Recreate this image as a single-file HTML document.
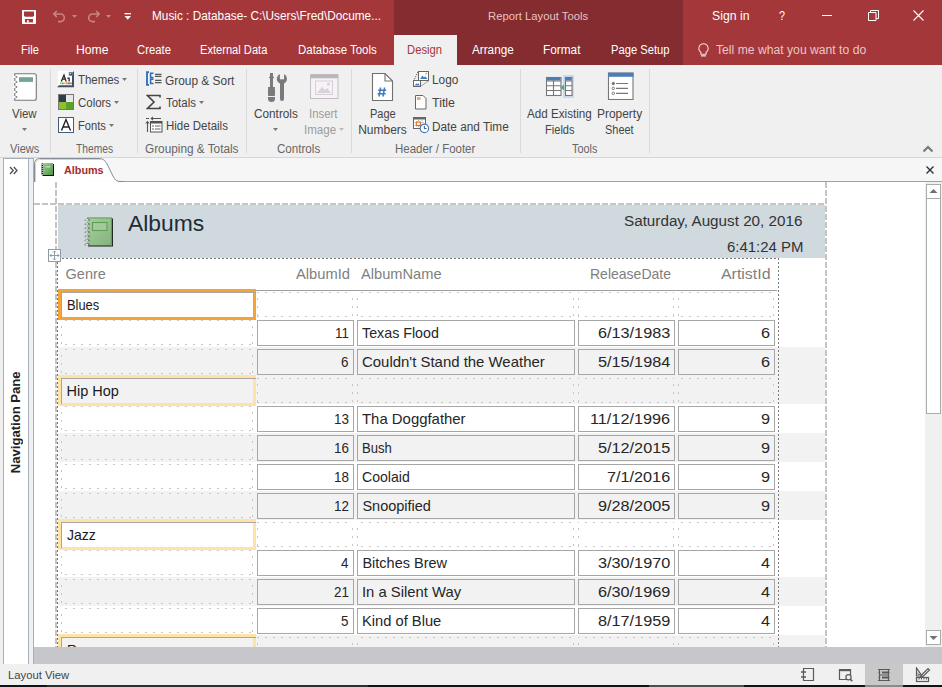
<!DOCTYPE html>
<html><head><meta charset="utf-8"><style>
html,body{margin:0;padding:0;}
body{width:942px;height:687px;position:relative;overflow:hidden;font-family:"Liberation Sans", sans-serif;background:#fff}
body div, body svg{position:absolute;}
</style></head><body>
<div style="left:0px;top:0px;width:942px;height:65px;background:#A4373A"></div>
<div style="left:394px;top:0px;width:289px;height:65px;background:#842C2F"></div>
<div style="left:394px;top:35px;width:63px;height:30px;background:#F0F0F0"></div>
<div style="left:152.40px;top:9.00px;font-size:13px;line-height:13px;color:#FFFFFF;white-space:pre;transform:scaleX(0.9082);transform-origin:left top;">Music : Database- C:\Users\Fred\Docume...</div>
<div style="left:488.40px;top:10.77px;font-size:11.5px;line-height:11.5px;color:#E6C3C4;white-space:pre;transform:scaleX(0.9818);transform-origin:left top;">Report Layout Tools</div>
<div style="left:712.00px;top:8.50px;font-size:13px;line-height:13px;color:#FFFFFF;white-space:pre;transform:scaleX(0.9427);transform-origin:left top;">Sign in</div>
<div style="left:778.50px;top:8.50px;font-size:13px;line-height:13px;color:#FFFFFF;white-space:pre;transform:scaleX(0.8316);transform-origin:left top;">?</div>
<div style="left:822px;top:15px;width:10px;height:1px;background:#fff"></div>
<svg style="left:868px;top:10px" width="11" height="11"><path d="M0.5 2.5h7.5v8h-7.5z M2.5 2.5v-2h8v8h-2.5" fill="none" stroke="#fff" stroke-width="1"/></svg>
<svg style="left:913px;top:10px" width="12" height="11"><path d="M0.5 0.5L10.5 10.5M10.5 0.5L0.5 10.5" stroke="#fff" stroke-width="1.1"/></svg>
<svg style="left:22px;top:10px" width="14" height="14"><rect x="0" y="0" width="14" height="14" rx="0.8" fill="#fff"/><path d="M2 1.6h10v4.2l-1 1H3l-1-1z" fill="#A4373A"/><rect x="3" y="9" width="8" height="3.4" fill="#A4373A"/><rect x="5" y="10.2" width="1.8" height="2.2" fill="#fff"/></svg>
<svg style="left:51px;top:9px" width="16" height="15"><path d="M3 5h6.5a3.8 3.8 0 0 1 0 7.6H7M5.8 2L2.8 5l3 3" fill="none" stroke="#C98487" stroke-width="1.6"/></svg>
<svg style="left:72px;top:15px" width="6" height="4"><path d="M0 0h5l-2.5 3z" fill="#C98487"/></svg>
<svg style="left:86px;top:9px" width="16" height="15"><path d="M13 5H6.5a3.8 3.8 0 0 0 0 7.6H9M10.2 2l3 3-3 3" fill="none" stroke="#C98487" stroke-width="1.6"/></svg>
<svg style="left:106px;top:15px" width="6" height="4"><path d="M0 0h5l-2.5 3z" fill="#C98487"/></svg>
<svg style="left:124px;top:13px" width="8" height="8"><rect x="0.5" y="0" width="6.5" height="1.3" fill="#fff"/><path d="M0.5 3h6.5l-3.25 3.8z" fill="#fff"/></svg>
<div style="left:21.30px;top:44.42px;font-size:12.5px;line-height:12.5px;color:#FFFFFF;white-space:pre;transform:scaleX(0.8894);transform-origin:left top;">File</div>
<div style="left:75.50px;top:44.42px;font-size:12.5px;line-height:12.5px;color:#FFFFFF;white-space:pre;transform:scaleX(0.9738);transform-origin:left top;">Home</div>
<div style="left:137.20px;top:44.42px;font-size:12.5px;line-height:12.5px;color:#FFFFFF;white-space:pre;transform:scaleX(0.9040);transform-origin:left top;">Create</div>
<div style="left:200.30px;top:44.42px;font-size:12.5px;line-height:12.5px;color:#FFFFFF;white-space:pre;transform:scaleX(0.8890);transform-origin:left top;">External Data</div>
<div style="left:297.50px;top:44.42px;font-size:12.5px;line-height:12.5px;color:#FFFFFF;white-space:pre;transform:scaleX(0.9158);transform-origin:left top;">Database Tools</div>
<div style="left:472.20px;top:44.42px;font-size:12.5px;line-height:12.5px;color:#FFFFFF;white-space:pre;transform:scaleX(0.9371);transform-origin:left top;">Arrange</div>
<div style="left:543.30px;top:44.42px;font-size:12.5px;line-height:12.5px;color:#FFFFFF;white-space:pre;transform:scaleX(0.9453);transform-origin:left top;">Format</div>
<div style="left:610.50px;top:44.42px;font-size:12.5px;line-height:12.5px;color:#FFFFFF;white-space:pre;transform:scaleX(0.8957);transform-origin:left top;">Page Setup</div>
<div style="left:407.40px;top:44.42px;font-size:12.5px;line-height:12.5px;color:#A4373A;white-space:pre;transform:scaleX(0.9014);transform-origin:left top;">Design</div>
<svg style="left:698px;top:43px" width="12" height="14"><path d="M5.5 0.8a4.6 4.6 0 0 0-2.6 8.4v2h5.2v-2A4.6 4.6 0 0 0 5.5 0.8z" fill="none" stroke="#F3DADB" stroke-width="1.1"/><rect x="3" y="12.2" width="5" height="1.3" fill="#F3DADB"/></svg>
<div style="left:715.60px;top:44.42px;font-size:12.5px;line-height:12.5px;color:#E9C6C7;white-space:pre;transform:scaleX(0.9737);transform-origin:left top;">Tell me what you want to do</div>
<div style="left:0px;top:65px;width:942px;height:92px;background:#F0F0F0"></div>
<div style="left:0px;top:157px;width:942px;height:1px;background:#D6D6D6"></div>
<div style="left:50px;top:69px;width:1px;height:84px;background:#DADADA"></div>
<div style="left:137px;top:69px;width:1px;height:84px;background:#DADADA"></div>
<div style="left:246px;top:69px;width:1px;height:84px;background:#DADADA"></div>
<div style="left:351px;top:69px;width:1px;height:84px;background:#DADADA"></div>
<div style="left:520px;top:69px;width:1px;height:84px;background:#DADADA"></div>
<div style="left:649px;top:69px;width:1px;height:84px;background:#DADADA"></div>
<div style="left:10.10px;top:142.74px;font-size:12px;line-height:12px;color:#666666;white-space:pre;transform:scaleX(0.9214);transform-origin:left top;">Views</div>
<div style="left:75.50px;top:142.74px;font-size:12px;line-height:12px;color:#666666;white-space:pre;transform:scaleX(0.8541);transform-origin:left top;">Themes</div>
<div style="left:145.10px;top:142.74px;font-size:12px;line-height:12px;color:#666666;white-space:pre;transform:scaleX(0.9826);transform-origin:left top;">Grouping &amp; Totals</div>
<div style="left:277.30px;top:142.74px;font-size:12px;line-height:12px;color:#666666;white-space:pre;transform:scaleX(0.9664);transform-origin:left top;">Controls</div>
<div style="left:395.40px;top:142.74px;font-size:12px;line-height:12px;color:#666666;white-space:pre;transform:scaleX(0.9553);transform-origin:left top;">Header / Footer</div>
<div style="left:572.10px;top:142.74px;font-size:12px;line-height:12px;color:#666666;white-space:pre;transform:scaleX(0.9029);transform-origin:left top;">Tools</div>
<svg style="left:13px;top:73px" width="25" height="29"><path d="M1.8 0.7H21.3a2 2 0 0 1 2 2V25.3a2 2 0 0 1-2 2H1.8z" fill="#fff" stroke="#777" stroke-width="1.1"/><rect x="6" y="4.2" width="14" height="4.7" fill="#74A592"/><rect x="0.3" y="3" width="2.4" height="2" fill="#FFFFFF"/><rect x="2.6" y="3" width="1.6" height="2" fill="#8A8A8A"/><rect x="0.3" y="8" width="2.4" height="2" fill="#FFFFFF"/><rect x="2.6" y="8" width="1.6" height="2" fill="#8A8A8A"/><rect x="0.3" y="13" width="2.4" height="2" fill="#FFFFFF"/><rect x="2.6" y="13" width="1.6" height="2" fill="#8A8A8A"/><rect x="0.3" y="18" width="2.4" height="2" fill="#FFFFFF"/><rect x="2.6" y="18" width="1.6" height="2" fill="#8A8A8A"/><rect x="0.3" y="23" width="2.4" height="2" fill="#FFFFFF"/><rect x="2.6" y="23" width="1.6" height="2" fill="#8A8A8A"/></svg>
<div style="left:12.20px;top:107.84px;font-size:12px;line-height:12px;color:#444444;white-space:pre;transform:scaleX(0.9535);transform-origin:left top;">View</div>
<svg style="left:22px;top:128px" width="6" height="4"><path d="M0 0h5l-2.5 3z" fill="#777"/></svg>
<svg style="left:57px;top:70px" width="18" height="18"><rect x="0.8" y="1" width="15" height="15.5" fill="#fff"/><path d="M0 17.2L2 15.2H15V3L17 1V17.2z" fill="#3D5068"/><rect x="12" y="2.2" width="3.4" height="3.4" fill="#3D5068" stroke="#7A90B0" stroke-width="0.6"/><path d="M12.8 3h1.6l-1.6 1.6z" fill="#fff"/><path d="M4.3 11.6L7 5l2.2 6.6M5.3 9.2h3.2M10.3 8.2h1.8v3.4" fill="none" stroke="#1E2830" stroke-width="1.3"/><ellipse cx="3.9" cy="13.3" rx="0.85" ry="1.1" fill="#8CC63F"/><ellipse cx="5.9" cy="13.3" rx="0.85" ry="1.1" fill="#3FA535"/><ellipse cx="8" cy="13.3" rx="0.85" ry="1.1" fill="#F2B01E"/><ellipse cx="10" cy="13.3" rx="0.85" ry="1.1" fill="#F26522"/><ellipse cx="12" cy="13.3" rx="0.85" ry="1.1" fill="#D7261E"/><ellipse cx="14" cy="13.3" rx="0.85" ry="1.1" fill="#8C7D3C"/></svg>
<svg style="left:58px;top:94px" width="16" height="16"><rect x="0.5" y="0.5" width="15" height="15" fill="#fff" stroke="#777"/><rect x="1" y="1" width="7" height="7" fill="#2C3E4A"/><rect x="8" y="1" width="7" height="7" fill="#E8E8E8"/><rect x="1" y="8" width="7" height="7" fill="#8DC02A"/><rect x="8" y="8" width="7" height="7" fill="#5BA22C"/></svg>
<svg style="left:58px;top:117px" width="16" height="16"><rect x="0.5" y="0.5" width="15" height="15" fill="#fff" stroke="#4A5A7A"/><path d="M3.5 13.5L8 2.5l4.5 11M5 10h6" fill="none" stroke="#222" stroke-width="1.4"/></svg>
<div style="left:77.60px;top:73.94px;font-size:12px;line-height:12px;color:#444444;white-space:pre;transform:scaleX(0.9534);transform-origin:left top;">Themes</div>
<div style="left:77.60px;top:97.14px;font-size:12px;line-height:12px;color:#444444;white-space:pre;transform:scaleX(0.9544);transform-origin:left top;">Colors</div>
<div style="left:77.60px;top:119.74px;font-size:12px;line-height:12px;color:#444444;white-space:pre;transform:scaleX(0.9300);transform-origin:left top;">Fonts</div>
<svg style="left:122px;top:78px" width="6" height="4"><path d="M0 0h5l-2.5 3z" fill="#777"/></svg>
<svg style="left:114px;top:101px" width="6" height="4"><path d="M0 0h5l-2.5 3z" fill="#777"/></svg>
<svg style="left:109px;top:124px" width="6" height="4"><path d="M0 0h5l-2.5 3z" fill="#777"/></svg>
<svg style="left:146px;top:71px" width="17" height="16"><path d="M3 1.2H1v12.6h2" fill="none" stroke="#2E6DB4" stroke-width="1.8"/><path d="M7.5 2.2H4.6v4.2h2.9M7.5 8.2H4.6v4.2h2.9" fill="none" stroke="#2E6DB4" stroke-width="1.5"/><path d="M9 3.4h6.5M9 5.4h6.5M9 9.4h6.5M9 11.6h6.5" stroke="#555" stroke-width="1.1"/></svg>
<svg style="left:146px;top:94px" width="16" height="16"><path d="M14 3.5V1.5H1.5L8 8l-6.5 6.5H14v-2" fill="none" stroke="#444" stroke-width="1.6"/></svg>
<svg style="left:145px;top:116px" width="18" height="17"><path d="M1 2.5h3M6 2.5h10M8 0.8L6.2 2.5 8 4.2" fill="none" stroke="#555" stroke-width="1.1"/><path d="M2.5 16V6M0.8 7.5L2.5 5.5l1.7 2" fill="none" stroke="#555" stroke-width="1.1"/><rect x="5.5" y="5.5" width="11.5" height="10.5" fill="#fff" stroke="#555"/><rect x="5.5" y="5.5" width="11.5" height="2" fill="#555"/><path d="M7 10h2M10 10h5.5M7 13h2M10 13h5.5" stroke="#666"/></svg>
<div style="left:165.20px;top:74.54px;font-size:12px;line-height:12px;color:#444444;white-space:pre;transform:scaleX(0.9911);transform-origin:left top;">Group &amp; Sort</div>
<div style="left:165.70px;top:97.24px;font-size:12px;line-height:12px;color:#444444;white-space:pre;transform:scaleX(0.9547);transform-origin:left top;">Totals</div>
<div style="left:165.70px;top:120.14px;font-size:12px;line-height:12px;color:#444444;white-space:pre;transform:scaleX(0.9570);transform-origin:left top;">Hide Details</div>
<svg style="left:199px;top:101px" width="6" height="4"><path d="M0 0h5l-2.5 3z" fill="#777"/></svg>
<svg style="left:262px;top:72px" width="30" height="30"><g fill="#7A7A7A"><rect x="8" y="1" width="3" height="15"/><rect x="7" y="4.8" width="5" height="1.3"/><rect x="6" y="15" width="7" height="1.4"/><rect x="6" y="16" width="7" height="8" rx="0.8"/><path d="M6 25h7v1.5a3.5 3.5 0 0 1-7 0z"/><circle cx="19.9" cy="6.8" r="5.1"/><rect x="18" y="9" width="4" height="20" rx="2"/></g><path d="M17.9 0.5h4.1v6.8h-4.1z" fill="#F0F0F0"/></svg>
<div style="left:253.70px;top:107.74px;font-size:12px;line-height:12px;color:#444444;white-space:pre;transform:scaleX(0.9821);transform-origin:left top;">Controls</div>
<svg style="left:273px;top:128px" width="6" height="4"><path d="M0 0h5l-2.5 3z" fill="#777"/></svg>
<svg style="left:310px;top:74px" width="29" height="25"><rect x="0.5" y="0.5" width="27.5" height="24" fill="#F6F2F6" stroke="#C4BEC4"/><rect x="0.5" y="0.5" width="27.5" height="3.8" fill="#B9B5B9"/><rect x="5.5" y="7" width="17" height="13.5" fill="none" stroke="#D6D0D6" stroke-width="1"/><path d="M7 19l5-6 3 3 2-2 4 5z" fill="#DAD2DA"/><circle cx="18.5" cy="10" r="1.6" fill="#DAD2DA"/></svg>
<div style="left:309.30px;top:107.74px;font-size:12px;line-height:12px;color:#9C9C9C;white-space:pre;transform:scaleX(0.9500);transform-origin:left top;">Insert</div>
<div style="left:303.50px;top:124.04px;font-size:12px;line-height:12px;color:#9C9C9C;white-space:pre;transform:scaleX(0.9652);transform-origin:left top;">Image</div>
<svg style="left:339px;top:128px" width="6" height="4"><path d="M0 0h5l-2.5 3z" fill="#BBBBBB"/></svg>
<svg style="left:371px;top:73px" width="23" height="28"><path d="M1.5 0.5h12.5l7.5 7.5v19.5h-20z" fill="#fff" stroke="#707070" stroke-width="1.1"/><path d="M14 0.5v7.5h7.5" fill="none" stroke="#707070" stroke-width="1.1"/><path d="M9.6 14.5l-1.6 9M13.6 14.5l-1.6 9M7.2 17.3h8M6.6 20.8h8" fill="none" stroke="#3F7CC0" stroke-width="1.5"/></svg>
<div style="left:370.40px;top:108.04px;font-size:12px;line-height:12px;color:#444444;white-space:pre;transform:scaleX(0.9172);transform-origin:left top;">Page</div>
<div style="left:358.20px;top:123.84px;font-size:12px;line-height:12px;color:#444444;white-space:pre;">Numbers</div>
<svg style="left:412px;top:70px" width="18" height="18"><rect x="6.5" y="1.5" width="10" height="9" fill="#fff" stroke="#666"/><path d="M8 9l2.5-3.5 1.5 2 1.2-1.3L15.5 9z" fill="#3F7CC0"/><rect x="13.5" y="2.8" width="1.6" height="1.6" fill="#F0A030"/><rect x="1.5" y="10.5" width="7" height="6" fill="#fff" stroke="#666"/><path d="M2.5 15.5l2-2.2 1 1 1-1 1.3 2.2z" fill="#3F7CC0"/><path d="M6 1.8L2 10M16.5 11L9 16" fill="none" stroke="#555" stroke-dasharray="1.2 1.2"/></svg>
<svg style="left:414px;top:95px" width="13" height="15"><path d="M1.5 0.5h7.5l3 3v10.5h-10.5z" fill="#fff" stroke="#666"/><rect x="3" y="2" width="3.6" height="3" fill="#E6B25E"/></svg>
<svg style="left:412px;top:116px" width="18" height="18"><rect x="1.5" y="1.5" width="12" height="11" fill="#fff" stroke="#666"/><rect x="1" y="1" width="13" height="2.5" fill="#666"/><path d="M2.5 6.5h10M2.5 9.5h10M6.5 4v8M10 4v8" stroke="#999" stroke-dasharray="1 1" stroke-width="0.8"/><rect x="4.3" y="6" width="4" height="3.6" fill="#fff" stroke="#E07020" stroke-width="1.2"/><circle cx="12.4" cy="12.4" r="4.2" fill="#fff" stroke="#3F7CC0" stroke-width="1.2"/><path d="M12.3 9.8v2.8h2.2" fill="none" stroke="#3F4850" stroke-width="1"/></svg>
<div style="left:432.30px;top:74.44px;font-size:12px;line-height:12px;color:#444444;white-space:pre;transform:scaleX(0.9850);transform-origin:left top;">Logo</div>
<div style="left:432.30px;top:97.44px;font-size:12px;line-height:12px;color:#444444;white-space:pre;transform:scaleX(1.0360);transform-origin:left top;">Title</div>
<div style="left:432.30px;top:120.54px;font-size:12px;line-height:12px;color:#444444;white-space:pre;transform:scaleX(0.9826);transform-origin:left top;">Date and Time</div>
<svg style="left:545px;top:74px" width="30" height="25"><rect x="18" y="1" width="11" height="23" fill="#C8DCEE"/><rect x="1.5" y="3.5" width="14.5" height="18" fill="#fff" stroke="#777" stroke-width="1.1"/><rect x="2" y="3.5" width="13.5" height="3" fill="#4A7EBB"/><path d="M8.5 3.5v18M2 7h14M2 11.8h14M2 16.5h14" stroke="#777" stroke-width="1.1"/><rect x="20.5" y="3.5" width="6.5" height="18" fill="#fff" stroke="#777" stroke-width="1.1"/><rect x="21" y="3.5" width="5.5" height="3" fill="#4A7EBB"/><path d="M21 7h6M21 11.8h6M21 16.5h6" stroke="#777" stroke-width="1.1"/><path d="M15.2 13.5l4-3v6z" fill="#5BA08A"/></svg>
<div style="left:527.00px;top:108.04px;font-size:12px;line-height:12px;color:#444444;white-space:pre;transform:scaleX(0.9712);transform-origin:left top;">Add Existing</div>
<div style="left:545.10px;top:123.84px;font-size:12px;line-height:12px;color:#444444;white-space:pre;transform:scaleX(0.9238);transform-origin:left top;">Fields</div>
<svg style="left:607px;top:72px" width="27" height="28"><rect x="1.5" y="1" width="24.5" height="26.5" fill="#fff" stroke="#777" stroke-width="1.1"/><rect x="1" y="0.8" width="25.5" height="4" fill="#4A7EBB"/><circle cx="6.3" cy="11.5" r="1.2" fill="#777" stroke="#777"/><circle cx="6.3" cy="16.4" r="1.2" fill="#fff" stroke="#777"/><circle cx="6.3" cy="21.4" r="1.2" fill="#fff" stroke="#777"/><path d="M9 11.5h12M9 16.4h12M9 21.4h12" stroke="#777" stroke-width="1.1"/></svg>
<div style="left:596.80px;top:108.04px;font-size:12px;line-height:12px;color:#444444;white-space:pre;transform:scaleX(0.9943);transform-origin:left top;">Property</div>
<div style="left:605.00px;top:123.84px;font-size:12px;line-height:12px;color:#444444;white-space:pre;transform:scaleX(0.9114);transform-origin:left top;">Sheet</div>
<svg style="left:922px;top:145px" width="12" height="8"><path d="M1.5 6.5l4.5-4.5 4.5 4.5" fill="none" stroke="#777" stroke-width="2"/></svg>
<div style="left:0px;top:158px;width:942px;height:506px;background:#F0F0F0"></div>
<div style="left:3px;top:158px;width:26px;height:506px;background:#FFFFFF;border-left:1px solid #A9AFB8;border-right:1px solid #A9AFB8;border-top:1px solid #A9AFB8;box-sizing:border-box"></div>
<div style="left:29px;top:158px;width:5px;height:506px;background:#EEF0F3;border-right:1px solid #A9AFB8;border-top:1px solid #A9AFB8;box-sizing:border-box"></div>
<svg style="left:9px;top:166px" width="10" height="9"><path d="M1 1l3.2 3.5L1 8M4.8 1l3.2 3.5L4.8 8" fill="none" stroke="#4A5058" stroke-width="1.3"/></svg>
<div style="left:-34px;top:415px;width:100px;height:14px;transform:rotate(-90deg);font-size:12px;font-weight:bold;color:#222;text-align:center;line-height:14px;white-space:nowrap"><span style="display:inline-block;transform:scaleX(1.09)">Navigation Pane</span></div>
<div style="left:34px;top:158px;width:908px;height:24px;background:#F6F6F6"></div>
<div style="left:118px;top:181px;width:824px;height:1px;background:#9AA1A9"></div>
<svg style="left:34px;top:158px" width="90" height="24"><path d="M0.5 24V5.5a5 5 0 0 1 5-5H65C69.5 0.5 71.5 3 73.5 7L79.5 19C81.5 22.5 83 23.5 87 23.5H90" fill="#FFFFFF" stroke="#858C95"/><path d="M1.5 24V5.5a4 4 0 0 1 4-4H67" fill="none" stroke="#E8CFA8"/></svg>
<svg style="left:41px;top:163px" width="13" height="13"><defs><linearGradient id="g0" x1="0" y1="0" x2="1" y2="1"><stop offset="0" stop-color="#A6D49C"/><stop offset="1" stop-color="#4C9246"/></linearGradient></defs><rect x="1.5" y="1" width="11.5" height="12" fill="#111"/><rect x="1" y="0" width="11" height="12" fill="url(#g0)"/><rect x="4" y="2.5" width="5.5" height="2.5" fill="#B7DDAE" stroke="#6FAE66" stroke-width="0.7"/><path d="M1.2 0.5v11.5" stroke="#111" stroke-width="1.4"/><path d="M1.2 1v11" stroke="#fff" stroke-width="1" stroke-dasharray="1 1"/></svg>
<div style="left:64.20px;top:164.79px;font-size:11px;line-height:11px;color:#A52B2F;font-weight:bold;white-space:pre;transform:scaleX(0.9823);transform-origin:left top;">Albums</div>
<svg style="left:925px;top:165px" width="10" height="10"><path d="M1.5 1.5l7 7M8.5 1.5l-7 7" stroke="#2E3238" stroke-width="1.4"/></svg>
<div style="left:34px;top:182px;width:891px;height:465px;background:#FFFFFF"></div>
<div style="left:926px;top:184px;width:15px;height:461px;background:#F0F0F0"></div>
<div style="left:926px;top:184px;width:15px;height:15px;border:1px solid #ABABAB;box-sizing:border-box;background:#fff"></div>
<div style="left:926px;top:198px;width:15px;height:216px;border:1px solid #ABABAB;box-sizing:border-box;background:#fff"></div>
<div style="left:926px;top:630px;width:15px;height:15px;border:1px solid #ABABAB;box-sizing:border-box;background:#fff"></div>
<svg style="left:929px;top:188px" width="9" height="6"><path d="M0.5 5l4-4 4 4z" fill="#707070"/></svg>
<svg style="left:929px;top:635px" width="9" height="6"><path d="M0.5 1l4 4 4-4z" fill="#707070"/></svg>
<div style="left:34px;top:647px;width:908px;height:17px;background:#C6C7CA"></div>
<div style="left:58px;top:205px;width:767px;height:53px;background:#CFD9DE"></div>
<svg style="left:34px;top:182px" width="794" height="465"><path d="M0 22h792" stroke="#C4C4C4" stroke-width="2" stroke-dasharray="6 2"/><path d="M22 0v465M792 0v465" stroke="#C4C4C4" stroke-width="2" stroke-dasharray="6 2"/></svg>
<svg style="left:84px;top:216px" width="32" height="32"><defs><linearGradient id="g1" x1="0" y1="0" x2="1" y2="1"><stop offset="0" stop-color="#A9CFA0"/><stop offset="1" stop-color="#84B27B"/></linearGradient></defs><rect x="4" y="2.5" width="25" height="28" fill="#1A1D1A"/><rect x="3" y="1.5" width="25" height="28" fill="url(#g1)"/><path d="M3 2h24.5v27.5" fill="none" stroke="#5FA056" stroke-width="1.2"/><rect x="8.5" y="6.5" width="14.5" height="8" fill="#A2CB99" stroke="#5E9E55" stroke-width="1.1"/><path d="M0.8 4.5q2.5-2.5 5 0" fill="none" stroke="#777B82" stroke-width="1.5"/><path d="M1.5 3.7h2.5" stroke="#FFFFFF" stroke-width="0.9"/><path d="M0.8 8.6q2.5-2.5 5 0" fill="none" stroke="#777B82" stroke-width="1.5"/><path d="M1.5 7.8h2.5" stroke="#FFFFFF" stroke-width="0.9"/><path d="M0.8 12.7q2.5-2.5 5 0" fill="none" stroke="#777B82" stroke-width="1.5"/><path d="M1.5 11.9h2.5" stroke="#FFFFFF" stroke-width="0.9"/><path d="M0.8 16.8q2.5-2.5 5 0" fill="none" stroke="#777B82" stroke-width="1.5"/><path d="M1.5 16.0h2.5" stroke="#FFFFFF" stroke-width="0.9"/><path d="M0.8 20.9q2.5-2.5 5 0" fill="none" stroke="#777B82" stroke-width="1.5"/><path d="M1.5 20.1h2.5" stroke="#FFFFFF" stroke-width="0.9"/><path d="M0.8 25.0q2.5-2.5 5 0" fill="none" stroke="#777B82" stroke-width="1.5"/><path d="M1.5 24.2h2.5" stroke="#FFFFFF" stroke-width="0.9"/><path d="M0.8 29.1q2.5-2.5 5 0" fill="none" stroke="#777B82" stroke-width="1.5"/><path d="M1.5 28.3h2.5" stroke="#FFFFFF" stroke-width="0.9"/></svg>
<div style="left:128.30px;top:213.05px;font-size:22.5px;line-height:22.5px;color:#1E2B38;white-space:pre;transform:scaleX(1.0155);transform-origin:left top;">Albums</div>
<div style="left:624.30px;top:214.15px;font-size:14px;line-height:14px;color:#333333;white-space:pre;transform:scaleX(1.0883);transform-origin:left top;">Saturday, August 20, 2016</div>
<div style="left:726.50px;top:239.85px;font-size:14px;line-height:14px;color:#333333;white-space:pre;transform:scaleX(1.0683);transform-origin:left top;">6:41:24 PM</div>
<svg style="left:48px;top:249px" width="13" height="13"><rect x="0.5" y="0.5" width="12" height="12" fill="#fff" stroke="#8F9BA5"/><path d="M6.5 2v9M2 6.5h9M5 3.5l1.5-1.5 1.5 1.5M5 9.5l1.5 1.5 1.5-1.5M3.5 5L2 6.5 3.5 8M9.5 5L11 6.5 9.5 8" fill="none" stroke="#8F9BA5"/></svg>
<div style="left:65.60px;top:266.53px;font-size:14.5px;line-height:14.5px;color:#7F7F7F;white-space:pre;">Genre</div>
<div style="left:296.00px;top:266.53px;font-size:14.5px;line-height:14.5px;color:#7F7F7F;white-space:pre;transform:scaleX(1.0148);transform-origin:left top;">AlbumId</div>
<div style="left:360.70px;top:266.53px;font-size:14.5px;line-height:14.5px;color:#7F7F7F;white-space:pre;transform:scaleX(1.0094);transform-origin:left top;">AlbumName</div>
<div style="left:589.80px;top:266.53px;font-size:14.5px;line-height:14.5px;color:#7F7F7F;white-space:pre;transform:scaleX(0.9665);transform-origin:left top;">ReleaseDate</div>
<div style="left:721.30px;top:266.53px;font-size:14.5px;line-height:14.5px;color:#7F7F7F;white-space:pre;transform:scaleX(1.0977);transform-origin:left top;">ArtistId</div>
<div style="left:0;top:0;width:942px;height:647px;overflow:hidden"><div style="left:58px;top:290px;width:767px;height:28px;background:#FFFFFF"></div><div style="left:58px;top:318px;width:767px;height:29px;background:#FFFFFF"></div><div style="left:58px;top:347px;width:767px;height:29px;background:#F2F2F2"></div><div style="left:58px;top:376px;width:767px;height:28px;background:#F2F2F2"></div><div style="left:58px;top:404px;width:767px;height:29px;background:#FFFFFF"></div><div style="left:58px;top:433px;width:767px;height:29px;background:#F2F2F2"></div><div style="left:58px;top:462px;width:767px;height:29px;background:#FFFFFF"></div><div style="left:58px;top:491px;width:767px;height:29px;background:#F2F2F2"></div><div style="left:58px;top:520px;width:767px;height:28px;background:#FFFFFF"></div><div style="left:58px;top:548px;width:767px;height:29px;background:#FFFFFF"></div><div style="left:58px;top:577px;width:767px;height:29px;background:#F2F2F2"></div><div style="left:58px;top:606px;width:767px;height:29px;background:#FFFFFF"></div><div style="left:58px;top:635px;width:767px;height:28px;background:#F2F2F2"></div><svg style="left:257px;top:292px" width="96" height="25"><path d="M0 0.5H96M0 24.5H96" stroke="#C6C6C6" stroke-dasharray="2 6" stroke-dashoffset="0"/><path d="M0.5 0V25M95.5 0V25" stroke="#C6C6C6" stroke-dasharray="2 6" stroke-dashoffset="2"/></svg><svg style="left:357px;top:292px" width="217" height="25"><path d="M0 0.5H217M0 24.5H217" stroke="#C6C6C6" stroke-dasharray="2 6" stroke-dashoffset="4"/><path d="M0.5 0V25M216.5 0V25" stroke="#C6C6C6" stroke-dasharray="2 6" stroke-dashoffset="2"/></svg><svg style="left:578px;top:292px" width="96" height="25"><path d="M0 0.5H96M0 24.5H96" stroke="#C6C6C6" stroke-dasharray="2 6" stroke-dashoffset="1"/><path d="M0.5 0V25M95.5 0V25" stroke="#C6C6C6" stroke-dasharray="2 6" stroke-dashoffset="2"/></svg><svg style="left:678px;top:292px" width="96" height="25"><path d="M0 0.5H96M0 24.5H96" stroke="#C6C6C6" stroke-dasharray="2 6" stroke-dashoffset="5"/><path d="M0.5 0V25M95.5 0V25" stroke="#C6C6C6" stroke-dasharray="2 6" stroke-dashoffset="2"/></svg><svg style="left:61px;top:320px" width="192" height="25"><path d="M0 0.5H192M0 24.5H192" stroke="#C6C6C6" stroke-dasharray="2 6" stroke-dashoffset="4"/><path d="M0.5 0V25M191.5 0V25" stroke="#C6C6C6" stroke-dasharray="2 6" stroke-dashoffset="2"/></svg><div style="left:257px;top:320px;width:97px;height:26px;border:1px solid #A6A6A6;box-sizing:border-box;background:#FFFFFF"></div><div style="left:357px;top:320px;width:218px;height:26px;border:1px solid #A6A6A6;box-sizing:border-box;background:#FFFFFF"></div><div style="left:578px;top:320px;width:97px;height:26px;border:1px solid #A6A6A6;box-sizing:border-box;background:#FFFFFF"></div><div style="left:678px;top:320px;width:97px;height:26px;border:1px solid #A6A6A6;box-sizing:border-box;background:#FFFFFF"></div><svg style="left:61px;top:349px" width="192" height="25"><path d="M0 0.5H192M0 24.5H192" stroke="#C6C6C6" stroke-dasharray="2 6" stroke-dashoffset="4"/><path d="M0.5 0V25M191.5 0V25" stroke="#C6C6C6" stroke-dasharray="2 6" stroke-dashoffset="2"/></svg><div style="left:257px;top:349px;width:97px;height:26px;border:1px solid #A6A6A6;box-sizing:border-box;background:#F2F2F2"></div><div style="left:357px;top:349px;width:218px;height:26px;border:1px solid #A6A6A6;box-sizing:border-box;background:#F2F2F2"></div><div style="left:578px;top:349px;width:97px;height:26px;border:1px solid #A6A6A6;box-sizing:border-box;background:#F2F2F2"></div><div style="left:678px;top:349px;width:97px;height:26px;border:1px solid #A6A6A6;box-sizing:border-box;background:#F2F2F2"></div><svg style="left:257px;top:378px" width="96" height="25"><path d="M0 0.5H96M0 24.5H96" stroke="#C6C6C6" stroke-dasharray="2 6" stroke-dashoffset="0"/><path d="M0.5 0V25M95.5 0V25" stroke="#C6C6C6" stroke-dasharray="2 6" stroke-dashoffset="2"/></svg><svg style="left:357px;top:378px" width="217" height="25"><path d="M0 0.5H217M0 24.5H217" stroke="#C6C6C6" stroke-dasharray="2 6" stroke-dashoffset="4"/><path d="M0.5 0V25M216.5 0V25" stroke="#C6C6C6" stroke-dasharray="2 6" stroke-dashoffset="2"/></svg><svg style="left:578px;top:378px" width="96" height="25"><path d="M0 0.5H96M0 24.5H96" stroke="#C6C6C6" stroke-dasharray="2 6" stroke-dashoffset="1"/><path d="M0.5 0V25M95.5 0V25" stroke="#C6C6C6" stroke-dasharray="2 6" stroke-dashoffset="2"/></svg><svg style="left:678px;top:378px" width="96" height="25"><path d="M0 0.5H96M0 24.5H96" stroke="#C6C6C6" stroke-dasharray="2 6" stroke-dashoffset="5"/><path d="M0.5 0V25M95.5 0V25" stroke="#C6C6C6" stroke-dasharray="2 6" stroke-dashoffset="2"/></svg><svg style="left:61px;top:406px" width="192" height="25"><path d="M0 0.5H192M0 24.5H192" stroke="#C6C6C6" stroke-dasharray="2 6" stroke-dashoffset="4"/><path d="M0.5 0V25M191.5 0V25" stroke="#C6C6C6" stroke-dasharray="2 6" stroke-dashoffset="2"/></svg><div style="left:257px;top:406px;width:97px;height:26px;border:1px solid #A6A6A6;box-sizing:border-box;background:#FFFFFF"></div><div style="left:357px;top:406px;width:218px;height:26px;border:1px solid #A6A6A6;box-sizing:border-box;background:#FFFFFF"></div><div style="left:578px;top:406px;width:97px;height:26px;border:1px solid #A6A6A6;box-sizing:border-box;background:#FFFFFF"></div><div style="left:678px;top:406px;width:97px;height:26px;border:1px solid #A6A6A6;box-sizing:border-box;background:#FFFFFF"></div><svg style="left:61px;top:435px" width="192" height="25"><path d="M0 0.5H192M0 24.5H192" stroke="#C6C6C6" stroke-dasharray="2 6" stroke-dashoffset="4"/><path d="M0.5 0V25M191.5 0V25" stroke="#C6C6C6" stroke-dasharray="2 6" stroke-dashoffset="2"/></svg><div style="left:257px;top:435px;width:97px;height:26px;border:1px solid #A6A6A6;box-sizing:border-box;background:#F2F2F2"></div><div style="left:357px;top:435px;width:218px;height:26px;border:1px solid #A6A6A6;box-sizing:border-box;background:#F2F2F2"></div><div style="left:578px;top:435px;width:97px;height:26px;border:1px solid #A6A6A6;box-sizing:border-box;background:#F2F2F2"></div><div style="left:678px;top:435px;width:97px;height:26px;border:1px solid #A6A6A6;box-sizing:border-box;background:#F2F2F2"></div><svg style="left:61px;top:464px" width="192" height="25"><path d="M0 0.5H192M0 24.5H192" stroke="#C6C6C6" stroke-dasharray="2 6" stroke-dashoffset="4"/><path d="M0.5 0V25M191.5 0V25" stroke="#C6C6C6" stroke-dasharray="2 6" stroke-dashoffset="2"/></svg><div style="left:257px;top:464px;width:97px;height:26px;border:1px solid #A6A6A6;box-sizing:border-box;background:#FFFFFF"></div><div style="left:357px;top:464px;width:218px;height:26px;border:1px solid #A6A6A6;box-sizing:border-box;background:#FFFFFF"></div><div style="left:578px;top:464px;width:97px;height:26px;border:1px solid #A6A6A6;box-sizing:border-box;background:#FFFFFF"></div><div style="left:678px;top:464px;width:97px;height:26px;border:1px solid #A6A6A6;box-sizing:border-box;background:#FFFFFF"></div><svg style="left:61px;top:493px" width="192" height="25"><path d="M0 0.5H192M0 24.5H192" stroke="#C6C6C6" stroke-dasharray="2 6" stroke-dashoffset="4"/><path d="M0.5 0V25M191.5 0V25" stroke="#C6C6C6" stroke-dasharray="2 6" stroke-dashoffset="2"/></svg><div style="left:257px;top:493px;width:97px;height:26px;border:1px solid #A6A6A6;box-sizing:border-box;background:#F2F2F2"></div><div style="left:357px;top:493px;width:218px;height:26px;border:1px solid #A6A6A6;box-sizing:border-box;background:#F2F2F2"></div><div style="left:578px;top:493px;width:97px;height:26px;border:1px solid #A6A6A6;box-sizing:border-box;background:#F2F2F2"></div><div style="left:678px;top:493px;width:97px;height:26px;border:1px solid #A6A6A6;box-sizing:border-box;background:#F2F2F2"></div><svg style="left:257px;top:522px" width="96" height="25"><path d="M0 0.5H96M0 24.5H96" stroke="#C6C6C6" stroke-dasharray="2 6" stroke-dashoffset="0"/><path d="M0.5 0V25M95.5 0V25" stroke="#C6C6C6" stroke-dasharray="2 6" stroke-dashoffset="2"/></svg><svg style="left:357px;top:522px" width="217" height="25"><path d="M0 0.5H217M0 24.5H217" stroke="#C6C6C6" stroke-dasharray="2 6" stroke-dashoffset="4"/><path d="M0.5 0V25M216.5 0V25" stroke="#C6C6C6" stroke-dasharray="2 6" stroke-dashoffset="2"/></svg><svg style="left:578px;top:522px" width="96" height="25"><path d="M0 0.5H96M0 24.5H96" stroke="#C6C6C6" stroke-dasharray="2 6" stroke-dashoffset="1"/><path d="M0.5 0V25M95.5 0V25" stroke="#C6C6C6" stroke-dasharray="2 6" stroke-dashoffset="2"/></svg><svg style="left:678px;top:522px" width="96" height="25"><path d="M0 0.5H96M0 24.5H96" stroke="#C6C6C6" stroke-dasharray="2 6" stroke-dashoffset="5"/><path d="M0.5 0V25M95.5 0V25" stroke="#C6C6C6" stroke-dasharray="2 6" stroke-dashoffset="2"/></svg><svg style="left:61px;top:550px" width="192" height="25"><path d="M0 0.5H192M0 24.5H192" stroke="#C6C6C6" stroke-dasharray="2 6" stroke-dashoffset="4"/><path d="M0.5 0V25M191.5 0V25" stroke="#C6C6C6" stroke-dasharray="2 6" stroke-dashoffset="2"/></svg><div style="left:257px;top:550px;width:97px;height:26px;border:1px solid #A6A6A6;box-sizing:border-box;background:#FFFFFF"></div><div style="left:357px;top:550px;width:218px;height:26px;border:1px solid #A6A6A6;box-sizing:border-box;background:#FFFFFF"></div><div style="left:578px;top:550px;width:97px;height:26px;border:1px solid #A6A6A6;box-sizing:border-box;background:#FFFFFF"></div><div style="left:678px;top:550px;width:97px;height:26px;border:1px solid #A6A6A6;box-sizing:border-box;background:#FFFFFF"></div><svg style="left:61px;top:579px" width="192" height="25"><path d="M0 0.5H192M0 24.5H192" stroke="#C6C6C6" stroke-dasharray="2 6" stroke-dashoffset="4"/><path d="M0.5 0V25M191.5 0V25" stroke="#C6C6C6" stroke-dasharray="2 6" stroke-dashoffset="2"/></svg><div style="left:257px;top:579px;width:97px;height:26px;border:1px solid #A6A6A6;box-sizing:border-box;background:#F2F2F2"></div><div style="left:357px;top:579px;width:218px;height:26px;border:1px solid #A6A6A6;box-sizing:border-box;background:#F2F2F2"></div><div style="left:578px;top:579px;width:97px;height:26px;border:1px solid #A6A6A6;box-sizing:border-box;background:#F2F2F2"></div><div style="left:678px;top:579px;width:97px;height:26px;border:1px solid #A6A6A6;box-sizing:border-box;background:#F2F2F2"></div><svg style="left:61px;top:608px" width="192" height="25"><path d="M0 0.5H192M0 24.5H192" stroke="#C6C6C6" stroke-dasharray="2 6" stroke-dashoffset="4"/><path d="M0.5 0V25M191.5 0V25" stroke="#C6C6C6" stroke-dasharray="2 6" stroke-dashoffset="2"/></svg><div style="left:257px;top:608px;width:97px;height:26px;border:1px solid #A6A6A6;box-sizing:border-box;background:#FFFFFF"></div><div style="left:357px;top:608px;width:218px;height:26px;border:1px solid #A6A6A6;box-sizing:border-box;background:#FFFFFF"></div><div style="left:578px;top:608px;width:97px;height:26px;border:1px solid #A6A6A6;box-sizing:border-box;background:#FFFFFF"></div><div style="left:678px;top:608px;width:97px;height:26px;border:1px solid #A6A6A6;box-sizing:border-box;background:#FFFFFF"></div><svg style="left:257px;top:637px" width="96" height="25"><path d="M0 0.5H96M0 24.5H96" stroke="#C6C6C6" stroke-dasharray="2 6" stroke-dashoffset="0"/><path d="M0.5 0V25M95.5 0V25" stroke="#C6C6C6" stroke-dasharray="2 6" stroke-dashoffset="2"/></svg><svg style="left:357px;top:637px" width="217" height="25"><path d="M0 0.5H217M0 24.5H217" stroke="#C6C6C6" stroke-dasharray="2 6" stroke-dashoffset="4"/><path d="M0.5 0V25M216.5 0V25" stroke="#C6C6C6" stroke-dasharray="2 6" stroke-dashoffset="2"/></svg><svg style="left:578px;top:637px" width="96" height="25"><path d="M0 0.5H96M0 24.5H96" stroke="#C6C6C6" stroke-dasharray="2 6" stroke-dashoffset="1"/><path d="M0.5 0V25M95.5 0V25" stroke="#C6C6C6" stroke-dasharray="2 6" stroke-dashoffset="2"/></svg><svg style="left:678px;top:637px" width="96" height="25"><path d="M0 0.5H96M0 24.5H96" stroke="#C6C6C6" stroke-dasharray="2 6" stroke-dashoffset="5"/><path d="M0.5 0V25M95.5 0V25" stroke="#C6C6C6" stroke-dasharray="2 6" stroke-dashoffset="2"/></svg><div style="left:58px;top:289px;width:198px;height:31px;border:3px solid #F5A335;box-sizing:border-box;background:#FFFFFF"></div><div style="left:61px;top:292px;width:195px;height:26px;border-left:1px solid #A6A6A6;border-top:1px solid #A6A6A6;box-sizing:border-box"></div><div style="left:58px;top:375px;width:198px;height:31px;border:3px solid #FDE3A6;box-sizing:border-box;background:#F2F2F2"></div><div style="left:61px;top:378px;width:195px;height:26px;border-left:1px solid #A6A6A6;border-top:1px solid #A6A6A6;box-sizing:border-box"></div><div style="left:58px;top:519px;width:198px;height:31px;border:3px solid #FDE3A6;box-sizing:border-box;background:#FFFFFF"></div><div style="left:61px;top:522px;width:195px;height:26px;border-left:1px solid #A6A6A6;border-top:1px solid #A6A6A6;box-sizing:border-box"></div><div style="left:58px;top:634px;width:198px;height:31px;border:3px solid #FDE3A6;box-sizing:border-box;background:#F2F2F2"></div><div style="left:61px;top:637px;width:195px;height:26px;border-left:1px solid #A6A6A6;border-top:1px solid #A6A6A6;box-sizing:border-box"></div><div style="left:66.50px;top:297.73px;font-size:14.5px;line-height:14.5px;color:#1A1A1A;white-space:pre;transform:scaleX(0.8883);transform-origin:left top;">Blues</div><div style="left:334.75px;top:325.73px;font-size:14.5px;line-height:14.5px;color:#262626;white-space:pre;transform:scaleX(0.9183);transform-origin:left top;">11</div><div style="left:362.40px;top:325.73px;font-size:14.5px;line-height:14.5px;color:#262626;white-space:pre;transform:scaleX(0.9839);transform-origin:left top;">Texas Flood</div><div style="left:598.05px;top:325.73px;font-size:14.5px;line-height:14.5px;color:#262626;white-space:pre;transform:scaleX(1.1197);transform-origin:left top;">6/13/1983</div><div style="left:761.27px;top:325.73px;font-size:14.5px;line-height:14.5px;color:#262626;white-space:pre;transform:scaleX(1.1224);transform-origin:left top;">6</div><div style="left:341.18px;top:354.73px;font-size:14.5px;line-height:14.5px;color:#262626;white-space:pre;transform:scaleX(0.9219);transform-origin:left top;">6</div><div style="left:362.40px;top:354.73px;font-size:14.5px;line-height:14.5px;color:#262626;white-space:pre;transform:scaleX(1.0298);transform-origin:left top;">Couldn't Stand the Weather</div><div style="left:598.05px;top:354.73px;font-size:14.5px;line-height:14.5px;color:#262626;white-space:pre;transform:scaleX(1.1197);transform-origin:left top;">5/15/1984</div><div style="left:761.27px;top:354.73px;font-size:14.5px;line-height:14.5px;color:#262626;white-space:pre;transform:scaleX(1.1224);transform-origin:left top;">6</div><div style="left:66.50px;top:383.73px;font-size:14.5px;line-height:14.5px;color:#1A1A1A;white-space:pre;">Hip Hop</div><div style="left:333.76px;top:411.73px;font-size:14.5px;line-height:14.5px;color:#262626;white-space:pre;transform:scaleX(0.9219);transform-origin:left top;">13</div><div style="left:362.40px;top:411.73px;font-size:14.5px;line-height:14.5px;color:#262626;white-space:pre;transform:scaleX(1.0280);transform-origin:left top;">Tha Doggfather</div><div style="left:590.22px;top:411.73px;font-size:14.5px;line-height:14.5px;color:#262626;white-space:pre;transform:scaleX(1.1202);transform-origin:left top;">11/12/1996</div><div style="left:761.27px;top:411.73px;font-size:14.5px;line-height:14.5px;color:#262626;white-space:pre;transform:scaleX(1.1224);transform-origin:left top;">9</div><div style="left:333.76px;top:440.73px;font-size:14.5px;line-height:14.5px;color:#262626;white-space:pre;transform:scaleX(0.9219);transform-origin:left top;">16</div><div style="left:362.40px;top:440.73px;font-size:14.5px;line-height:14.5px;color:#262626;white-space:pre;transform:scaleX(0.9014);transform-origin:left top;">Bush</div><div style="left:598.05px;top:440.73px;font-size:14.5px;line-height:14.5px;color:#262626;white-space:pre;transform:scaleX(1.1197);transform-origin:left top;">5/12/2015</div><div style="left:761.27px;top:440.73px;font-size:14.5px;line-height:14.5px;color:#262626;white-space:pre;transform:scaleX(1.1224);transform-origin:left top;">9</div><div style="left:333.76px;top:469.73px;font-size:14.5px;line-height:14.5px;color:#262626;white-space:pre;transform:scaleX(0.9219);transform-origin:left top;">18</div><div style="left:362.40px;top:469.73px;font-size:14.5px;line-height:14.5px;color:#262626;white-space:pre;transform:scaleX(0.9704);transform-origin:left top;">Coolaid</div><div style="left:607.08px;top:469.73px;font-size:14.5px;line-height:14.5px;color:#262626;white-space:pre;transform:scaleX(1.1193);transform-origin:left top;">7/1/2016</div><div style="left:761.27px;top:469.73px;font-size:14.5px;line-height:14.5px;color:#262626;white-space:pre;transform:scaleX(1.1224);transform-origin:left top;">9</div><div style="left:333.76px;top:498.73px;font-size:14.5px;line-height:14.5px;color:#262626;white-space:pre;transform:scaleX(0.9219);transform-origin:left top;">12</div><div style="left:362.40px;top:498.73px;font-size:14.5px;line-height:14.5px;color:#262626;white-space:pre;">Snoopified</div><div style="left:598.05px;top:498.73px;font-size:14.5px;line-height:14.5px;color:#262626;white-space:pre;transform:scaleX(1.1197);transform-origin:left top;">9/28/2005</div><div style="left:761.27px;top:498.73px;font-size:14.5px;line-height:14.5px;color:#262626;white-space:pre;transform:scaleX(1.1224);transform-origin:left top;">9</div><div style="left:66.50px;top:527.73px;font-size:14.5px;line-height:14.5px;color:#1A1A1A;white-space:pre;transform:scaleX(0.9665);transform-origin:left top;">Jazz</div><div style="left:341.18px;top:555.73px;font-size:14.5px;line-height:14.5px;color:#262626;white-space:pre;transform:scaleX(0.9219);transform-origin:left top;">4</div><div style="left:362.40px;top:555.73px;font-size:14.5px;line-height:14.5px;color:#262626;white-space:pre;">Bitches Brew</div><div style="left:598.05px;top:555.73px;font-size:14.5px;line-height:14.5px;color:#262626;white-space:pre;transform:scaleX(1.1197);transform-origin:left top;">3/30/1970</div><div style="left:761.27px;top:555.73px;font-size:14.5px;line-height:14.5px;color:#262626;white-space:pre;transform:scaleX(1.1224);transform-origin:left top;">4</div><div style="left:333.76px;top:584.73px;font-size:14.5px;line-height:14.5px;color:#262626;white-space:pre;transform:scaleX(0.9219);transform-origin:left top;">21</div><div style="left:362.40px;top:584.73px;font-size:14.5px;line-height:14.5px;color:#262626;white-space:pre;transform:scaleX(1.0216);transform-origin:left top;">In a Silent Way</div><div style="left:598.05px;top:584.73px;font-size:14.5px;line-height:14.5px;color:#262626;white-space:pre;transform:scaleX(1.1197);transform-origin:left top;">6/30/1969</div><div style="left:761.27px;top:584.73px;font-size:14.5px;line-height:14.5px;color:#262626;white-space:pre;transform:scaleX(1.1224);transform-origin:left top;">4</div><div style="left:341.18px;top:613.73px;font-size:14.5px;line-height:14.5px;color:#262626;white-space:pre;transform:scaleX(0.9219);transform-origin:left top;">5</div><div style="left:362.40px;top:613.73px;font-size:14.5px;line-height:14.5px;color:#262626;white-space:pre;transform:scaleX(1.0137);transform-origin:left top;">Kind of Blue</div><div style="left:598.05px;top:613.73px;font-size:14.5px;line-height:14.5px;color:#262626;white-space:pre;transform:scaleX(1.1197);transform-origin:left top;">8/17/1959</div><div style="left:761.27px;top:613.73px;font-size:14.5px;line-height:14.5px;color:#262626;white-space:pre;transform:scaleX(1.1224);transform-origin:left top;">4</div><div style="left:66.50px;top:642.73px;font-size:14.5px;line-height:14.5px;color:#1A1A1A;white-space:pre;transform:scaleX(0.9498);transform-origin:left top;">Rap</div></div>
<div style="left:256px;top:290px;width:521px;height:1px;background:#A0A0A0"></div>
<svg style="left:34px;top:258px" width="794" height="389"><path d="M24 0.5h721M744.5 0v389" stroke="#7A7A7A" stroke-dasharray="2 2"/><path d="M23.5 0v389" stroke="#6E7680" stroke-dasharray="2 2"/></svg>
<svg style="left:48px;top:249px" width="13" height="13"><rect x="0.5" y="0.5" width="12" height="12" fill="#fff" stroke="#8F9BA5"/><path d="M6.5 2v9M2 6.5h9M5 3.5l1.5-1.5 1.5 1.5M5 9.5l1.5 1.5 1.5-1.5M3.5 5L2 6.5 3.5 8M9.5 5L11 6.5 9.5 8" fill="none" stroke="#8F9BA5"/></svg>
<div style="left:0px;top:664px;width:942px;height:21px;background:#F0F0F0"></div>
<div style="left:0px;top:685px;width:942px;height:2px;background:#131313"></div>
<div style="left:47px;top:685px;width:321px;height:2px;background:#2F2F2F"></div>
<div style="left:649px;top:685px;width:95px;height:2px;background:#4E4E4E"></div>
<div style="left:865px;top:685px;width:38px;height:2px;background:#8A8A8A"></div>
<div style="left:7.60px;top:669.87px;font-size:11.5px;line-height:11.5px;color:#444444;white-space:pre;transform:scaleX(0.9792);transform-origin:left top;">Layout View</div>
<div style="left:865px;top:664px;width:38px;height:21px;background:#C8C8C8"></div>
<svg style="left:800px;top:667px" width="16" height="16"><path d="M3.5 1.5h10v12h-10z" fill="none" stroke="#5A5A5A" stroke-width="1.2"/><path d="M1 5h5M1 10h5" stroke="#5A5A5A" stroke-width="1.6"/></svg>
<svg style="left:838px;top:668px" width="16" height="14"><path d="M1.5 1.5h11v10h-11z" fill="none" stroke="#5A5A5A" stroke-width="1.2"/><rect x="1" y="1" width="12" height="2.2" fill="#5A5A5A"/><circle cx="10.5" cy="9.3" r="2.6" fill="#F0F0F0" stroke="#5A5A5A" stroke-width="1.2"/><path d="M12.3 11.2l2 2" stroke="#5A5A5A" stroke-width="1.6"/></svg>
<svg style="left:877px;top:668px" width="14" height="14"><path d="M1 1.5h12M1 12.5h12M2.5 1.5v11M11.5 1.5v11M2.5 7h9" fill="none" stroke="#5A5A5A" stroke-width="1.2"/><rect x="5" y="3.5" width="6" height="2" fill="#5A5A5A"/><rect x="5" y="8.5" width="6" height="2" fill="#5A5A5A"/><path d="M1.5 4.5h1M1.5 9.5h1M11.5 4.5h1M11.5 9.5h1" stroke="#5A5A5A"/></svg>
<svg style="left:914px;top:667px" width="17" height="16"><path d="M2.5 1v8h5.5z" fill="none" stroke="#5A5A5A" stroke-width="1.2"/><path d="M4 5.5v2h2" fill="none" stroke="#5A5A5A" stroke-width="0.8"/><path d="M7 8.5l7-7 1.5 1.5-7 7-2 .5z" fill="none" stroke="#5A5A5A" stroke-width="1.2"/><rect x="2.5" y="10.5" width="12" height="4" fill="none" stroke="#5A5A5A" stroke-width="1.2"/><path d="M5 11v1.5M7.5 11v1.5M10 11v1.5M12.5 11v1.5" stroke="#5A5A5A"/></svg>
</body></html>
